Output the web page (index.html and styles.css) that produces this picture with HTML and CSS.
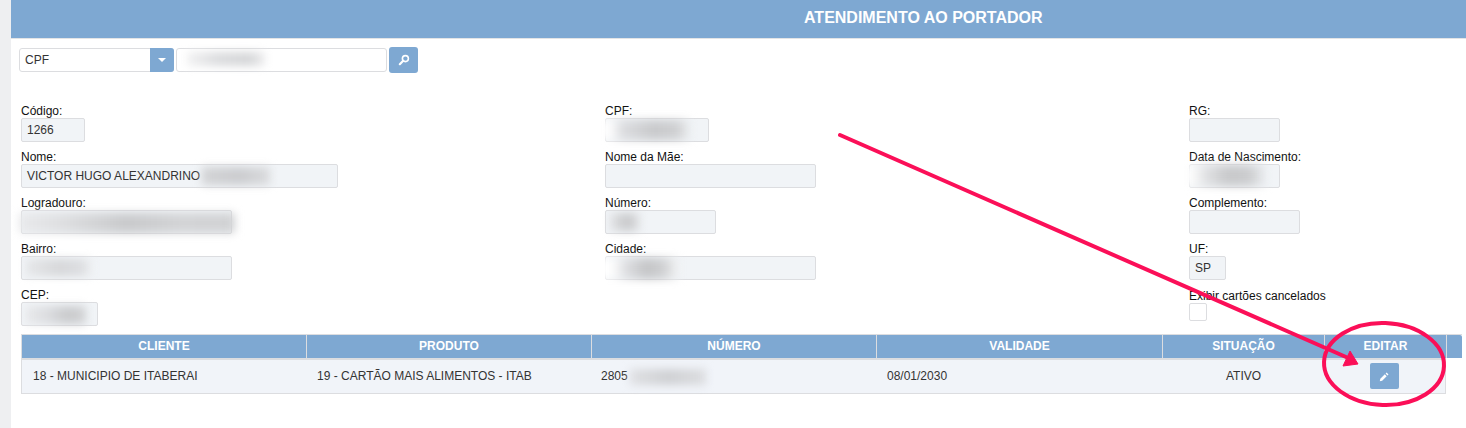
FILE: index.html
```html
<!DOCTYPE html>
<html lang="pt-BR">
<head>
    <meta charset="UTF-8">
    <meta name="viewport" content="width=device-width, initial-scale=1.0">
    <title>Atendimento ao Portador</title>
    <link rel="stylesheet" href="styles.css">
</head>
<body>

    <div class="gutter"></div>

    <div class="page">
        <div class="page-title">ATENDIMENTO AO PORTADOR</div>

        <!-- Busca -->
        <div class="search-bar">
            <div class="select-box">
                <span class="select-text">CPF</span>
                <span class="select-btn"><span class="caret"></span></span>
            </div>
            <div class="search-input"><span class="blur blur-search"></span></div>
            <button class="search-btn" aria-label="Buscar">
                <svg width="12" height="12" viewBox="0 0 12 12">
                    <circle cx="7.4" cy="4.6" r="3" fill="none" stroke="#fff" stroke-width="1.6"/>
                    <path d="M5.2 6.8 L1.8 10.2" stroke="#fff" stroke-width="2.2" stroke-linecap="round"/>
                </svg>
            </button>
        </div>

        <!-- Dados do portador -->
        <div class="fields">
            <div class="field">
                <label>Código:</label>
                <div class="box w-64">1266</div>
            </div>
            <div class="field">
                <label>CPF:</label>
                <div class="box w-104"><span class="blur blur-cpf"></span></div>
            </div>
            <div class="field">
                <label>RG:</label>
                <div class="box w-91"></div>
            </div>

            <div class="field">
                <label>Nome:</label>
                <div class="box w-317">VICTOR HUGO ALEXANDRINO<span class="blur blur-nome"></span></div>
            </div>
            <div class="field">
                <label>Nome da Mãe:</label>
                <div class="box w-211"></div>
            </div>
            <div class="field">
                <label>Data de Nascimento:</label>
                <div class="box w-91"><span class="blur blur-data"></span></div>
            </div>

            <div class="field">
                <label>Logradouro:</label>
                <div class="box w-211"><span class="blur blur-logradouro"></span></div>
            </div>
            <div class="field">
                <label>Número:</label>
                <div class="box w-111"><span class="blur blur-numero"></span></div>
            </div>
            <div class="field">
                <label>Complemento:</label>
                <div class="box w-111"></div>
            </div>

            <div class="field">
                <label>Bairro:</label>
                <div class="box w-211"><span class="blur blur-bairro"></span></div>
            </div>
            <div class="field">
                <label>Cidade:</label>
                <div class="box w-211"><span class="blur blur-cidade"></span></div>
            </div>
            <div class="field">
                <label>UF:</label>
                <div class="box w-37">SP</div>
            </div>

            <div class="field">
                <label>CEP:</label>
                <div class="box w-77"><span class="blur blur-cep"></span></div>
            </div>
            <div class="field"></div>
            <div class="field">
                <label class="label-check">Exibir cartões cancelados</label>
                <div class="checkbox"></div>
            </div>
        </div>

        <!-- Cartões -->
        <div class="table-wrap">
            <div class="t-head">
                <div class="th c-1">CLIENTE</div>
                <div class="th c-2">PRODUTO</div>
                <div class="th c-3">NÚMERO</div>
                <div class="th c-4">VALIDADE</div>
                <div class="th c-5">SITUAÇÃO</div>
                <div class="th c-6">EDITAR</div>
                <div class="th c-scroll"></div>
            </div>
            <div class="t-row">
                <div class="td c-1">18 - MUNICIPIO DE ITABERAI</div>
                <div class="td c-2">19 - CARTÃO MAIS ALIMENTOS - ITAB</div>
                <div class="td c-3">2805<span class="blur blur-cartao"></span></div>
                <div class="td c-4">08/01/2030</div>
                <div class="td c-5 center">ATIVO</div>
                <div class="td c-6 center">
                    <button class="edit-btn" aria-label="Editar">
                        <svg width="11" height="11" viewBox="0 0 11 11">
                            <path d="M0.8 10.2 L1.3 7.8 L5.8 3.3 L7.7 5.2 L3.2 9.7 Z" fill="#fff"/>
                            <path d="M6.6 2.5 L7.6 1.5 L9.5 3.4 L8.5 4.4 Z" fill="#fff"/>
                        </svg>
                    </button>
                </div>
            </div>
        </div>
    </div>

    <!-- Anotação por cima da tela -->
    <svg class="markup" width="1466" height="428" viewBox="0 0 1466 428">
        <path d="M840 135 L1346 357" stroke="#fb0f58" stroke-width="4" stroke-linecap="round" fill="none"/>
        <polygon points="1358,364 1343,366 1350,351" fill="#fb0f58" stroke="#fb0f58" stroke-width="1"/>
        <ellipse cx="1384" cy="364" rx="60" ry="41" fill="none" stroke="#fb0f58" stroke-width="4" transform="rotate(2 1384 364)"/>
    </svg>

</body>
</html>
```

FILE: styles.css
```css
* {
    box-sizing: border-box;
}

html, body {
    height: 100%;
}

body {
    font-family: "Liberation Sans", Arial, sans-serif;
    font-size: 12px;
    color: #222;
    background-color: #fff;
    margin: 0;
    display: flex;
    overflow: hidden;
}

.gutter {
    width: 11px;
    flex: none;
    background-color: #eeeff1;
}

.page {
    flex: 1;
    min-width: 0;
}

/* Title bar */
.page-title {
    height: 39px;
    padding: 9px 0 0 793px;
    background-color: #7ea8d2;
    border-bottom: 1px solid #e3e4e6;
    color: #fff;
    font-size: 16px;
    line-height: 18px;
    font-weight: bold;
}

/* Search */
.search-bar {
    display: flex;
    align-items: center;
    gap: 2px;
    margin: 8px 0 0 8px;
    height: 26px;
}

.select-box {
    width: 155px;
    height: 24px;
    display: flex;
    justify-content: space-between;
    border: 1px solid #dcdde0;
    border-radius: 3px;
    color: #333;
}

.select-text {
    padding-left: 5px;
    line-height: 22px;
}

.select-btn {
    width: 24px;
    margin: -1px;
    display: flex;
    align-items: center;
    justify-content: center;
    background-color: #7ea8d2;
    border-radius: 0 3px 3px 0;
}

.caret {
    border-left: 4px solid transparent;
    border-right: 4px solid transparent;
    border-top: 4px solid #fff;
}

.search-input {
    position: relative;
    width: 211px;
    height: 24px;
    border: 1px solid #dcdde0;
    border-radius: 3px;
}

.search-btn {
    width: 29px;
    height: 26px;
    padding: 0;
    border: none;
    border-radius: 3px;
    background-color: #7ea8d2;
    display: flex;
    align-items: center;
    justify-content: center;
}

/* Fields */
.fields {
    display: grid;
    grid-template-columns: 584px 584px 1fr;
    grid-auto-rows: 46px;
    margin: 30px 0 0 10px;
}

.field label {
    display: block;
    height: 15px;
    line-height: 17px;
    color: #111;
}

.field .label-check {
    line-height: 19px;
}

.box {
    position: relative;
    height: 24px;
    padding-left: 5px;
    line-height: 22px;
    white-space: nowrap;
    color: #333;
    background-color: #f1f4f7;
    border: 1px solid #dcdde0;
    border-radius: 2px;
}

.w-37 { width: 37px; }
.w-64 { width: 64px; }
.w-77 { width: 77px; }
.w-91 { width: 91px; }
.w-104 { width: 104px; }
.w-111 { width: 111px; }
.w-211 { width: 211px; }
.w-317 { width: 317px; }

.checkbox {
    width: 18px;
    height: 18px;
    margin-top: 1px;
    border: 1px solid #dcdde0;
    border-radius: 2px;
}

/* Blurred data */
.blur {
    position: absolute;
    filter: blur(4px);
}

.blur-search { left: 10px; top: 3px; width: 78px; height: 14px; background: linear-gradient(90deg, #f2f2f3, #dbdcde 40%, #d5d6d8 80%, #eeeeef); }
.blur-cpf { left: -6px; top: 1px; width: 90px; height: 20px; background: linear-gradient(90deg, #fff 10%, #dcdde0 25%, #c9cacc 60%, #cfd0d2 85%, #eceef0); }
.blur-nome { left: 180px; top: 2px; width: 68px; height: 18px; background: linear-gradient(90deg, #d3d4d6, #cbcccf 55%, #dadbdd 100%); }
.blur-data { left: -7px; top: 0; width: 82px; height: 21px; background: linear-gradient(90deg, #fff 8%, #dedfe1 30%, #c8c9cb 55%, #cbccce 80%, #e9ebee); }
.blur-logradouro { left: -3px; top: 2px; width: 216px; height: 20px; background: linear-gradient(90deg, #e9eaec, #dedfe1 20%, #c9cacc 50%, #d3d4d6 75%, #d1d2d4); }
.blur-numero { left: 4px; top: 2px; width: 30px; height: 18px; background: linear-gradient(90deg, #e3e4e6, #c6c7c9 60%, #e4e5e7); }
.blur-bairro { left: 4px; top: 2px; width: 66px; height: 17px; background: linear-gradient(90deg, #e6e7e9, #d6d7d9 50%, #dcdde0 85%, #eff1f3); }
.blur-cidade { left: -7px; top: 1px; width: 80px; height: 21px; background: linear-gradient(90deg, #fff 15%, #dcdde0 35%, #c4c5c7 60%, #cfd0d2 80%, #f4f5f6); }
.blur-cep { left: 4px; top: 3px; width: 60px; height: 18px; background: linear-gradient(90deg, #e8e9eb, #dcdde0 35%, #c9cacc 70%, #d3d4d6); }
.blur-cartao { left: 39px; top: 9px; width: 76px; height: 16px; background: linear-gradient(90deg, #dfe0e3, #cfd0d3 50%, #dcdde0); }

/* Table */
.table-wrap {
    margin: 1px 0 0 10px;
}

.t-head {
    display: flex;
    height: 24px;
    width: 1441px;
    border-top: 1px solid #dcdde0;
}

.th {
    flex: none;
    border-left: 1px solid #dcdde0;
    background-color: #7ea8d2;
    color: #fff;
    font-weight: bold;
    line-height: 22px;
    text-align: center;
}

.c-1 { width: 285px; }
.c-2 { width: 285px; }
.c-3 { width: 285px; }
.c-4 { width: 286px; }
.c-5 { width: 162px; }
.c-6 { width: 122px; }

.c-scroll {
    width: 16px;
    border-radius: 0 2px 0 0;
}

.t-row {
    display: flex;
    width: 1425px;
    height: 36px;
    background-color: #f1f4f9;
    border: 1px solid #dcdde0;
    border-top: 2px solid #dcdde0;
}

.td {
    position: relative;
    flex: none;
    padding-left: 11px;
    line-height: 32px;
    color: #333;
}

.td.center {
    padding-left: 0;
    text-align: center;
}

.t-row .c-1 { width: 284px; }
.t-row .c-3 { padding-left: 10px; }
.t-row .c-4 { width: 287px; }
.t-row .c-5 { width: 161px; }
.t-row .c-6 { width: 120px; }

.edit-btn {
    width: 29px;
    height: 26px;
    margin-top: 3px;
    padding: 0;
    border: none;
    border-radius: 2px;
    background-color: #7ea8d2;
    vertical-align: top;
}

.edit-btn svg {
    display: block;
    margin: 0 auto;
}

/* Red marks */
.markup {
    position: absolute;
    top: 0;
    left: 0;
    pointer-events: none;
}
```
